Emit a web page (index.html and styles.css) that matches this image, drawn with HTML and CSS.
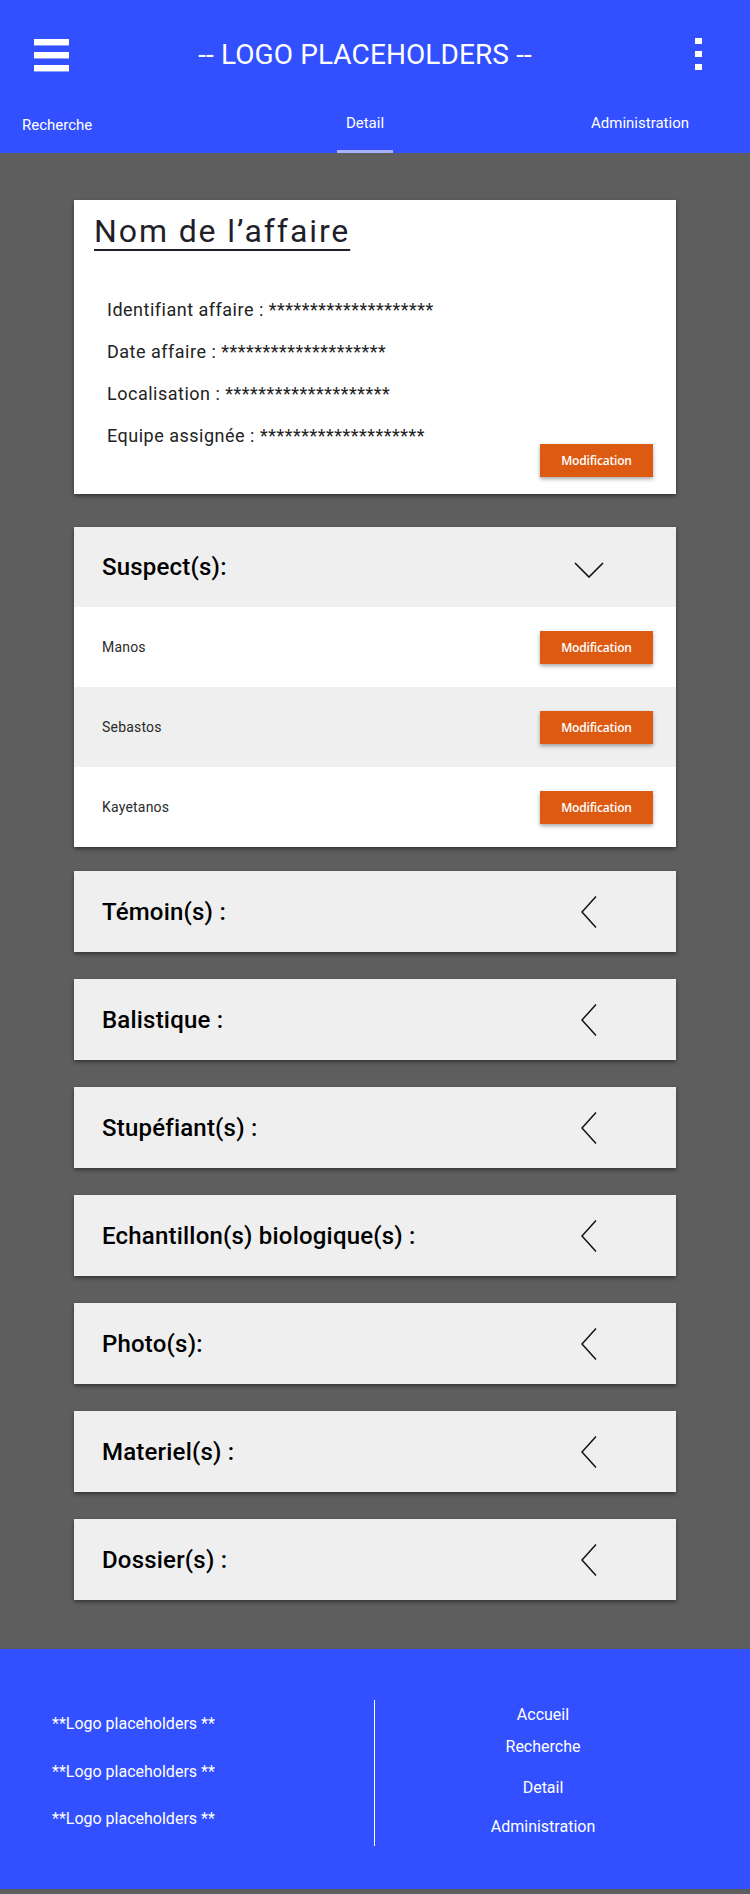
FILE: index.html
```html
<!DOCTYPE html>
<html lang="fr">
<head>
<meta charset="utf-8">
<title>Detail</title>
<link rel="stylesheet" href="styles.css">
</head>
<body>
<header class="appbar">
  <div class="topbar">
    <div class="hamburger"><span></span><span></span><span></span></div>
    <div class="brand">-- LOGO PLACEHOLDERS --</div>
    <div class="kebab"><span></span><span></span><span></span></div>
  </div>
  <nav class="tabs">
    <div class="tab tab-left">Recherche</div>
    <div class="tab tab-center active">Detail</div>
    <div class="tab tab-right">Administration</div>
  </nav>
</header>

<main class="content">
  <section class="card info-card">
    <h1 class="case-title">Nom de l’affaire</h1>
    <div class="info-body">
      <ul class="fields">
        <li>Identifiant affaire : ********************</li>
        <li>Date affaire : ********************</li>
        <li>Localisation : ********************</li>
        <li>Equipe assignée : ********************</li>
      </ul>
      <button class="btn">Modification</button>
    </div>
  </section>

  <section class="card panel open">
    <div class="panel-head">
      <h2 class="panel-title">Suspect(s):</h2>
      <span class="chev">
        <svg width="30" height="16" viewBox="0 0 30 16"><polyline points="1,1 15,15 29,1" fill="none" stroke="#111" stroke-width="1.6"/></svg>
      </span>
    </div>
    <div class="row"><span class="name">Manos</span><button class="btn">Modification</button></div>
    <div class="row alt"><span class="name">Sebastos</span><button class="btn">Modification</button></div>
    <div class="row"><span class="name">Kayetanos</span><button class="btn">Modification</button></div>
  </section>

  <section class="card panel closed first">
    <div class="panel-head">
      <h2 class="panel-title">Témoin(s) :</h2>
      <span class="chev"><svg width="16" height="32" viewBox="0 0 16 32"><polyline points="15,0.5 1,16 15,31.5" fill="none" stroke="#111" stroke-width="1.5"/></svg></span>
    </div>
  </section>
  <section class="card panel closed">
    <div class="panel-head">
      <h2 class="panel-title">Balistique :</h2>
      <span class="chev"><svg width="16" height="32" viewBox="0 0 16 32"><polyline points="15,0.5 1,16 15,31.5" fill="none" stroke="#111" stroke-width="1.5"/></svg></span>
    </div>
  </section>
  <section class="card panel closed">
    <div class="panel-head">
      <h2 class="panel-title">Stupéfiant(s) :</h2>
      <span class="chev"><svg width="16" height="32" viewBox="0 0 16 32"><polyline points="15,0.5 1,16 15,31.5" fill="none" stroke="#111" stroke-width="1.5"/></svg></span>
    </div>
  </section>
  <section class="card panel closed">
    <div class="panel-head">
      <h2 class="panel-title">Echantillon(s) biologique(s) :</h2>
      <span class="chev"><svg width="16" height="32" viewBox="0 0 16 32"><polyline points="15,0.5 1,16 15,31.5" fill="none" stroke="#111" stroke-width="1.5"/></svg></span>
    </div>
  </section>
  <section class="card panel closed">
    <div class="panel-head">
      <h2 class="panel-title">Photo(s):</h2>
      <span class="chev"><svg width="16" height="32" viewBox="0 0 16 32"><polyline points="15,0.5 1,16 15,31.5" fill="none" stroke="#111" stroke-width="1.5"/></svg></span>
    </div>
  </section>
  <section class="card panel closed">
    <div class="panel-head">
      <h2 class="panel-title">Materiel(s) :</h2>
      <span class="chev"><svg width="16" height="32" viewBox="0 0 16 32"><polyline points="15,0.5 1,16 15,31.5" fill="none" stroke="#111" stroke-width="1.5"/></svg></span>
    </div>
  </section>
  <section class="card panel closed">
    <div class="panel-head">
      <h2 class="panel-title">Dossier(s) :</h2>
      <span class="chev"><svg width="16" height="32" viewBox="0 0 16 32"><polyline points="15,0.5 1,16 15,31.5" fill="none" stroke="#111" stroke-width="1.5"/></svg></span>
    </div>
  </section>
</main>

<footer class="footer">
  <div class="foot-left">
    <p>**Logo placeholders **</p>
    <p>**Logo placeholders **</p>
    <p>**Logo placeholders **</p>
  </div>
  <ul class="foot-right">
    <li class="f1">Accueil</li>
    <li class="f2">Recherche</li>
    <li class="f3">Detail</li>
    <li class="f4">Administration</li>
  </ul>
</footer>
</body>
</html>
```
FILE: styles.css
```css
* { box-sizing: border-box; }

body {
  margin: 0;
  padding-bottom: 5px;
  background: #5e5e5e;
  font-family: Roboto, "Liberation Sans", sans-serif;
}

/* ---------- header ---------- */
.appbar {
  background: #3250ff;
  color: #fff;
  height: 153px;
  display: flex;
  flex-direction: column;
}

.topbar {
  height: 108px;
  display: grid;
  grid-template-columns: 1fr auto 1fr;
  align-items: center;
  padding: 0 48px 0 34px;
}

.hamburger {
  display: flex;
  flex-direction: column;
  gap: 7px;
  width: 35px;
  padding-top: 1px;
}
.hamburger span {
  display: block;
  height: 6px;
  background: #fff;
  box-shadow: 0 1px 0 rgba(200, 210, 255, 0.6);
}

.brand {
  font-size: 28px;
  font-weight: 400;
  padding-right: 6px;
  letter-spacing: 0.1px;
}

.kebab {
  justify-self: end;
  display: flex;
  flex-direction: column;
  gap: 7px;
  width: 7px;
}
.kebab span {
  display: block;
  height: 6px;
  background: #fff;
}

.tabs {
  flex: 1;
  display: grid;
  grid-template-columns: 230px 270px 1fr;
  font-size: 15px;
}
.tab {
  position: relative;
  padding-top: 6px;
}
.tab-left { padding-left: 22px; padding-top: 8px; }
.tab-center { text-align: center; }
.tab-right { text-align: center; padding-left: 30px; }
.tab.active::after {
  content: "";
  position: absolute;
  left: 50%;
  bottom: 0;
  width: 56px;
  height: 3px;
  margin-left: -28px;
  background: #a4b2ff;
}

/* ---------- content ---------- */
.content {
  padding: 47px 74px 49px;
  display: flex;
  flex-direction: column;
}

.card {
  background: #fff;
  box-shadow: 0 2px 4px rgba(0, 0, 0, 0.45);
}

.info-card {
  padding: 11px 23px 17px 20px;
}
.case-title {
  margin: 0;
  font-size: 32px;
  font-weight: 400;
  line-height: 41px;
  letter-spacing: 1.9px;
  color: #1f1f2a;
  text-decoration: underline;
  text-decoration-thickness: 2px;
  text-underline-offset: 7px;
}

.info-body {
  margin-top: 37px;
  display: flex;
  justify-content: space-between;
  align-items: flex-end;
}

.fields {
  list-style: none;
  margin: 0 0 20px 13px;
  padding: 0;
  font-size: 18px;
  line-height: 42px;
  letter-spacing: 0.5px;
  color: #222;
}

.btn {
  width: 113px;
  height: 33px;
  border: 0;
  padding: 0;
  background: #dc5a12;
  color: #fff;
  font-family: "Open Sans", "Liberation Sans", sans-serif;
  font-weight: 600;
  font-size: 12px;
  letter-spacing: -0.2px;
  box-shadow: 0 2px 4px rgba(0, 0, 0, 0.35);
}

.panel { background: #fff; }
.panel.open { margin-top: 33px; }
.panel.closed { margin-top: 27px; }
.panel.closed.first { margin-top: 24px; }

.panel-head {
  height: 81px;
  background: #efefef;
  display: flex;
  align-items: center;
  justify-content: space-between;
  padding: 0 67px 0 28px;
}
.panel.open .panel-head { height: 80px; }

.panel-title {
  margin: 0;
  font-size: 24px;
  font-weight: 500;
  letter-spacing: 0.2px;
  color: #000;
}

.chev {
  width: 40px;
  display: flex;
  justify-content: center;
  align-items: center;
}
.panel.open .chev { padding-top: 5px; }

.row {
  height: 80px;
  display: flex;
  align-items: center;
  justify-content: space-between;
  padding: 0 23px 0 28px;
  background: #fff;
}
.row.alt { background: #efefef; }
.name {
  font-size: 14px;
  letter-spacing: 0.2px;
  color: #2a2a2a;
}

/* ---------- footer ---------- */
.footer {
  background: #3250ff;
  color: #fff;
  height: 240px;
  padding-top: 51px;
  display: flex;
  align-items: flex-start;
  font-size: 16px;
}

.foot-left {
  width: 374px;
  padding-left: 52px;
}
.foot-left p {
  margin: 0;
  line-height: 47.5px;
}

.foot-right {
  list-style: none;
  margin: 0;
  padding: 5px 39px 0 0;
  flex: 1;
  height: 146px;
  border-left: 1px solid #fff;
  text-align: center;
  line-height: 20px;
}
.foot-right .f2 { margin-top: 12px; }
.foot-right .f3 { margin-top: 21px; }
.foot-right .f4 { margin-top: 19px; }
```
